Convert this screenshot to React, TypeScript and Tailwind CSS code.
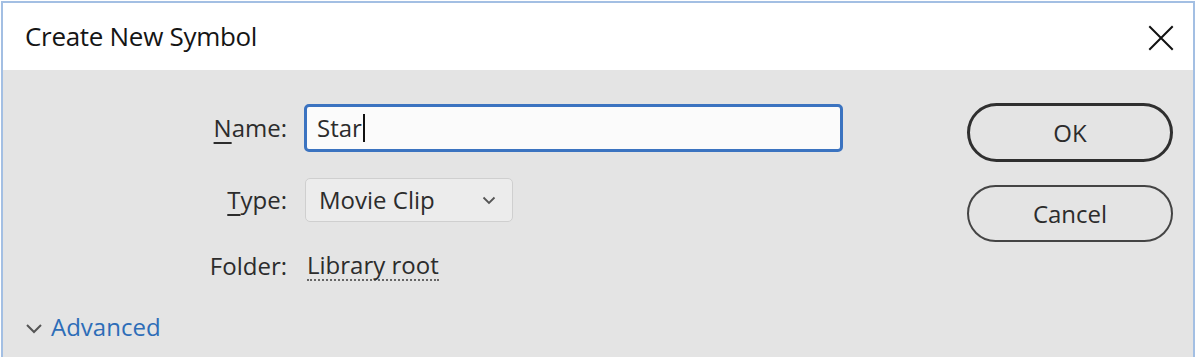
import React from "react";

export default function App() {
  const font = { fontFamily: '"Open Sans", "Noto Sans", Arial, sans-serif' };
  return (
    <div className="w-[1199px] h-[359px] bg-white pl-[1px] pt-[1px]" style={font}>
      <div className="w-[1194px] h-[356px] border-2 border-b-0 border-[#a3bfe3] flex flex-col">
        {/* Title bar */}
        <div className="h-[67px] bg-white flex items-center justify-between pl-[22px] pr-[19px] shrink-0">
          <span className="text-[26px] text-[#151515] tracking-[-0.3px]">Create New Symbol</span>
          <svg width="26" height="26" viewBox="0 0 26 26" className="mt-[2px]">
            <path d="M2 2 L24 24 M24 2 L2 24" stroke="#111" strokeWidth="2" strokeLinecap="square" />
          </svg>
        </div>
        {/* Body */}
        <div className="flex-1 bg-[#e4e4e4] flex text-[#2c2c2c]">
          <div className="flex-1 flex flex-col">
            <div className="flex items-center mt-[34px] h-[48px]">
              <div className="w-[285px] text-right text-[24px] pr-[1px]"><span className="underline underline-offset-[5px] decoration-[1.5px]">N</span>ame:</div>
              <div className="ml-[16px] w-[539px] h-[48px] bg-[#fbfbfb] border-[3px] border-[#3b73c0] rounded-[5px] flex items-center pl-[10px] text-[24px]">
                Star<span className="w-[2px] h-[28px] bg-[#111] ml-[1px]" />
              </div>
            </div>
            <div className="flex items-center mt-[26px] h-[44px]">
              <div className="w-[285px] text-right text-[24px] pr-[1px]"><span className="underline underline-offset-[5px] decoration-[1.5px]">T</span>ype:</div>
              <div className="ml-[17px] w-[208px] h-[44px] bg-[#ececec] border border-[#cfcfcf] rounded-[5px] flex items-center justify-between pl-[13px] pr-[16px] text-[24px]">
                <span>Movie Clip</span>
                <svg width="14" height="9" viewBox="0 0 14 9">
                  <path d="M1.5 1.5 L7 7 L12.5 1.5" stroke="#555" strokeWidth="1.8" fill="none" />
                </svg>
              </div>
            </div>
            <div className="flex items-center mt-[28px] h-[32px]">
              <div className="w-[285px] text-right text-[24px] pr-[1px]">Folder:</div>
              <div className="ml-[19px] text-[24px] leading-[28px] border-b-2 border-dotted border-[#666]">Library root</div>
            </div>
            <div className="flex items-center mt-[33px] h-[24px] pl-[22px] text-[#2d6db8]">
              <svg width="18" height="11" viewBox="0 0 18 11" className="mt-[2px]">
                <path d="M2 2 L9 9 L16 2" stroke="#555" strokeWidth="2" fill="none" />
              </svg>
              <span className="ml-[8px] text-[24px]">Advanced</span>
            </div>
          </div>
          <div className="w-[206px] mr-[20px] flex flex-col">
            <button className="mt-[33px] h-[59px] rounded-full border-[3px] border-[#2f2f2f] text-[24px] text-[#2c2c2c] bg-[#e4e4e4]">OK</button>
            <button className="mt-[23px] h-[57px] rounded-full border-2 border-[#444] text-[24px] text-[#2c2c2c] bg-[#e4e4e4]">Cancel</button>
          </div>
        </div>
      </div>
    </div>
  );
}
